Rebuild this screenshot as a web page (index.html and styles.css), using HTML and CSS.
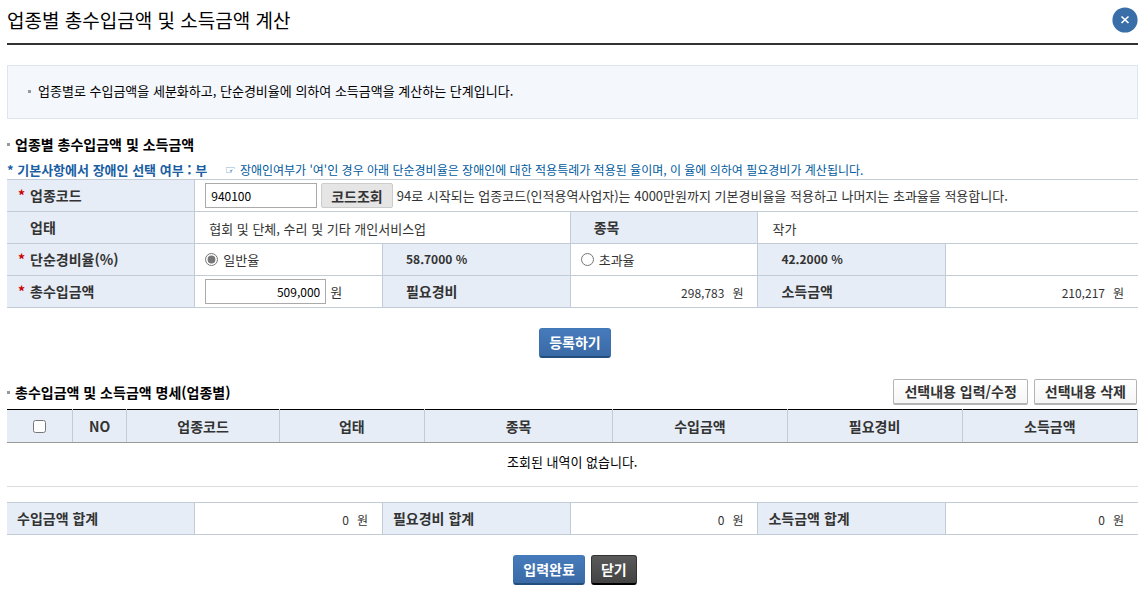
FILE: index.html
```html
<!DOCTYPE html>
<html lang="ko">
<head>
<meta charset="utf-8">
<title>업종별 총수입금액 및 소득금액 계산</title>
<link rel="stylesheet" href="styles.css">
</head>
<body>
<main class="popup">
  <header class="popup-head">
    <h1>업종별 총수입금액 및 소득금액 계산</h1>
    <button type="button" class="close" aria-label="닫기">
      <svg viewBox="0 0 26 26" width="26" height="26"><circle cx="13" cy="13" r="12.6" fill="#3a6ea9"/><path d="M9.5 9.5l7 6.5M16.5 9.5l-7 6.5" stroke="#fff" stroke-width="1.7" fill="none"/></svg>
    </button>
  </header>

  <div class="notice"><p class="bullet">업종별로 수입금액을 세분화하고, 단순경비율에 의하여 소득금액을 계산하는 단계입니다.</p></div>

  <h2 class="bullet">업종별 총수입금액 및 소득금액</h2>
  <p class="guide"><strong>* 기본사항에서 장애인 선택 여부 : 부</strong><span class="hand">☞</span><span>장애인여부가 '여'인 경우 아래 단순경비율은 장애인에 대한 적용특례가 적용된 율이며, 이 율에 의하여 필요경비가 계산됩니다.</span></p>

  <table class="form">
    <colgroup><col class="c6"><col class="c6"><col class="c6"><col class="c6"><col class="c6"><col></colgroup>
    <tr>
      <th class="req"><label for="code">업종코드</label></th>
      <td colspan="5"><div class="field"><input id="code" class="text code" type="text" value="940100"><button type="button" class="btn-gray">코드조회</button><span class="help">94로 시작되는 업종코드(인적용역사업자)는 4000만원까지 기본경비율을 적용하고 나머지는 초과율을 적용합니다.</span></div></td>
    </tr>
    <tr>
      <th>업태</th>
      <td colspan="2" class="value">협회 및 단체, 수리 및 기타 개인서비스업</td>
      <th>종목</th>
      <td colspan="2" class="value">작가</td>
    </tr>
    <tr>
      <th class="req">단순경비율(%)</th>
      <td><div class="field"><input type="radio" name="rate" id="r1" checked><label for="r1">일반율</label></div></td>
      <th class="rate">58.7000 %</th>
      <td><div class="field"><input type="radio" name="rate" id="r2"><label for="r2">초과율</label></div></td>
      <th class="rate">42.2000 %</th>
      <td></td>
    </tr>
    <tr>
      <th class="req"><label for="income">총수입금액</label></th>
      <td><div class="field"><input id="income" class="text money" type="text" value="509,000"><span>원</span></div></td>
      <th>필요경비</th>
      <td class="amount">298,783<span>원</span></td>
      <th>소득금액</th>
      <td class="amount">210,217<span>원</span></td>
    </tr>
  </table>

  <div class="actions"><button type="button" class="btn blue">등록하기</button></div>

  <div class="list-head">
    <h2 class="bullet">총수입금액 및 소득금액 명세(업종별)</h2>
    <div class="tools"><button type="button" class="btn-line">선택내용 입력/수정</button><button type="button" class="btn-line">선택내용 삭제</button></div>
  </div>
  <table class="list">
    <colgroup><col class="l1"><col class="l2"><col class="l3"><col class="l4"><col class="l5"><col class="l6"><col class="l7"><col></colgroup>
    <thead>
      <tr><th><input type="checkbox" aria-label="전체 선택"></th><th>NO</th><th>업종코드</th><th>업태</th><th>종목</th><th>수입금액</th><th>필요경비</th><th>소득금액</th></tr>
    </thead>
    <tbody><tr><td colspan="8">조회된 내역이 없습니다.</td></tr></tbody>
  </table>

  <table class="form total">
    <colgroup><col class="c6"><col class="c6"><col class="c6"><col class="c6"><col class="c6"><col></colgroup>
    <tr>
      <th>수입금액 합계</th><td class="amount">0<span>원</span></td>
      <th>필요경비 합계</th><td class="amount">0<span>원</span></td>
      <th>소득금액 합계</th><td class="amount">0<span>원</span></td>
    </tr>
  </table>

  <div class="actions"><button type="button" class="btn blue">입력완료</button><button type="button" class="btn dark">닫기</button></div>
</main>
</body>
</html>
```

FILE: styles.css
```css
* { box-sizing: border-box; }
body {
  margin: 0;
  background: #fff;
  color: #000;
  font: 13px/20px "Noto Sans CJK KR", sans-serif;
}
h1, h2, p { margin: 0; }
button, input { font-family: inherit; margin: 0; }
.popup { padding: 0 9px 12px 7px; }

.popup-head {
  display: flex;
  align-items: center;
  justify-content: space-between;
  height: 45px;
  padding-bottom: 4px;
  border-bottom: 2px solid #333;
}
h1 { font-size: 19px; line-height: 28px; font-weight: 400; }
.close { display: flex; padding: 0; border: 0; background: none; }

.notice {
  margin-top: 20px;
  padding: 15px 20px 17px;
  border: 1px solid #dfe5ef;
  background: #f4f7fc;
}
.bullet { display: flex; align-items: center; gap: 5px; }
.bullet::before { content: ""; width: 3px; height: 3px; background: #999; }
.notice .bullet { gap: 7px; }
h2 { font-size: 14px; line-height: 20px; font-weight: 700; }
.notice + h2 { margin-top: 15px; }

.guide {
  display: flex;
  margin-top: 7px;
  height: 18px;
  align-items: center;
  font-size: 12px;
  color: #005b9e;
  white-space: nowrap;
}
.guide strong { font-size: 13px; color: #1a5ea3; }
.hand { margin: 0 4px 0 18px; font-family: "DejaVu Sans", sans-serif; font-weight: 700; }

table { width: 100%; border-collapse: collapse; table-layout: fixed; }
.form { border-top: 1px solid #c1ccd6; }
.c6 { width: 16.6%; }
.form th, .form td {
  height: 32px;
  padding: 0 10px;
  border-bottom: 1px solid #c1ccd6;
  border-right: 1px solid #c1ccd6;
  color: #333;
  text-align: left;
  white-space: nowrap;
}
.form td:last-child { border-right: 0; }
.form th { padding: 0 0 2px 23px; background: #e7edf6; font-size: 14px; font-weight: 700; }
.form th.req { padding-left: 11px; }
.form th.rate { font-size: 12px; }
.req::before { content: "*"; display: inline-block; width: 12px; color: #c00; }
.form .value { padding: 3px 0 0 14px; }
.form .amount { padding: 3px 14px 0 0; text-align: right; font-size: 12px; }
.amount span { margin-left: 8px; }
.field { display: flex; align-items: center; gap: 4px; height: 25px; }
.text {
  height: 25px;
  padding: 0 5px;
  border: 1px solid #aaa;
  background: #fff;
  color: #000;
  font-size: 12px;
}
.code { width: 112px; }
.money { width: 121px; text-align: right; }
input[type="radio"] { width: 13px; height: 13px; accent-color: #767676; }
.field input[type="radio"] + label { margin-left: 1px; }
.btn-gray {
  height: 25px;
  padding: 0 9px;
  border: 1px solid #ccc;
  border-radius: 2px;
  background: #e5e5e5;
  color: #333;
  font-size: 14px;
  line-height: 20px;
  font-weight: 700;
}

.actions { display: flex; justify-content: center; gap: 6px; margin-top: 20px; padding-left: 5px; }
.btn {
  height: 30px;
  padding: 0 9px 1px;
  border: 1px solid;
  border-radius: 3px;
  color: #fff;
  font-size: 14px;
  line-height: 20px;
  font-weight: 700;
}
.blue { border-color: #427ab9 #3c70ae #234d7d; border-bottom-width: 2px; background: linear-gradient(#467bbb, #3a6aa6); }
.dark { border-color: #333 #333 #000; border-bottom-width: 2px; background: linear-gradient(#595959, #434343); }

.list-head { display: flex; justify-content: space-between; align-items: center; margin-top: 21px; }
.tools { display: flex; gap: 6px; padding-right: 1px; }
.btn-line {
  height: 26px;
  padding: 0 10px 1px;
  border: 1px solid #b4b4b4;
  border-bottom-width: 2px;
  border-radius: 2px;
  background: linear-gradient(#fff, #f6f6f6);
  color: #333;
  font-size: 14px;
  line-height: 20px;
  font-weight: 700;
}
.list { margin-top: 4px; border-top: 1px solid #000; }
.list th {
  height: 33px;
  padding: 0;
  border-right: 1px solid #c1ccd6;
  border-bottom: 1px solid #999;
  background: #e7edf6;
  color: #333;
  font-size: 14px;
  font-weight: 700;
}
.list th input { display: block; width: 13px; height: 13px; margin: 0 auto; }
.list td { height: 44px; padding: 0 0 5px; border-bottom: 1px solid #ddd; text-align: center; }
.l1 { width: 5.8%; }
.l2 { width: 4.8%; }
.l3 { width: 13.5%; }
.l4 { width: 12.8%; }
.l5 { width: 16.7%; }
.l6 { width: 15.4%; }
.l7 { width: 15.5%; }
.total { margin-top: 15px; }
.total th { padding-left: 10px; }
```
